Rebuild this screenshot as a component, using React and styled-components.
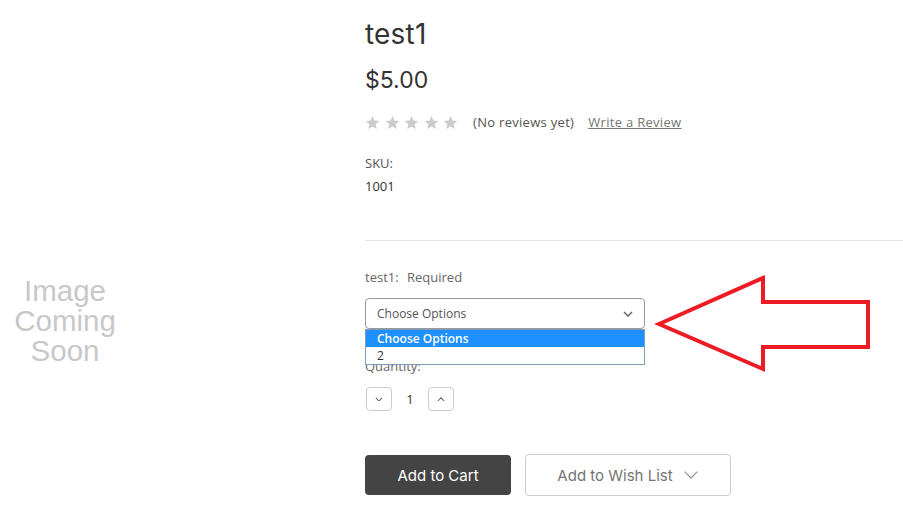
import React from "react";
import styled, { createGlobalStyle } from "styled-components";

const GlobalStyle = createGlobalStyle`
  html, body {
    margin: 0;
    padding: 0;
    background: #fff;
  }
  body {
    font-family: "Open Sans", "Liberation Sans", sans-serif;
    color: #545454;
  }
`;

const Page = styled.div`
  position: relative;
  width: 903px;
  height: 521px;
  overflow: hidden;
  display: grid;
  grid-template-columns: 130px 1fr;
  column-gap: 235px;
`;

const ImageSlot = styled.div`
  display: flex;
  align-items: center;
  justify-content: center;
  padding-top: 120px;
`;

const Placeholder = styled.div`
  font-family: "Liberation Sans", Arial, sans-serif;
  font-size: 29.5px;
  line-height: 30px;
  color: #c8c8c8;
  text-align: center;
`;

const Details = styled.div`
  padding-top: 16px;
`;

const Title = styled.h1`
  margin: 0;
  font-family: "Inter", sans-serif;
  font-weight: 400;
  font-size: 28px;
  line-height: 36px;
  color: #333;
  letter-spacing: 0.2px;
`;

const Price = styled.div`
  margin-top: 13px;
  font-family: "Inter", sans-serif;
  font-size: 23px;
  line-height: 30px;
  color: #333;
`;

const Rating = styled.div`
  display: flex;
  align-items: center;
  margin-top: 17px;
  height: 20px;
  font-size: 13px;
  letter-spacing: 0.3px;
`;

const Stars = styled.div`
  display: flex;
  gap: 4.5px;
  margin-right: 15px;
`;

const Muted = styled.span`
  color: #545454;
  margin-right: 14px;
`;

const ReviewLink = styled.a`
  color: #757575;
  text-decoration: underline;
`;

const Info = styled.dl`
  margin: 20px 0 0;
  font-size: 13px;
  line-height: 23px;
`;

const InfoTerm = styled.dt`
  color: #545454;
`;

const InfoValue = styled.dd`
  margin: 0;
  color: #333;
`;

const Rule = styled.hr`
  margin: 42px 0 0;
  border: 0;
  border-top: 1px solid #e5e5e5;
`;

const FieldLabel = styled.div`
  margin-top: 27px;
  font-size: 13px;
  line-height: 18px;
  color: #666;
  & small {
    font-size: 13px;
    margin-left: 5px;
  }
`;

const SelectWrap = styled.div`
  position: relative;
  margin-top: 12px;
  width: 280px;
`;

const Select = styled.div`
  box-sizing: border-box;
  height: 31px;
  border: 1px solid #999;
  border-radius: 4px;
  display: flex;
  align-items: center;
  justify-content: space-between;
  padding: 0 11px;
  font-size: 12px;
  color: #545454;
`;

const Menu = styled.ul`
  position: absolute;
  left: 0;
  right: 0;
  top: 31px;
  margin: 0;
  padding: 0;
  list-style: none;
  background: #fff;
  border: 1px solid #7f9db9;
  z-index: 2;
`;

const MenuItem = styled.li`
  height: 17px;
  line-height: 17px;
  padding: 0 11px;
  font-size: 12px;
  font-weight: ${(p) => (p.active ? 600 : 400)};
  background: ${(p) => (p.active ? "#1e90ff" : "#fff")};
  color: ${(p) => (p.active ? "#fff" : "#333")};
`;

const QtyLabel = styled.div`
  margin-top: 28px;
  font-size: 13px;
  line-height: 18px;
  color: #666;
`;

const QtyRow = styled.div`
  display: flex;
  align-items: center;
  margin-top: 12px;
`;

const QtyButton = styled.button`
  box-sizing: border-box;
  width: 26px;
  height: 24px;
  border: 1px solid #ccc;
  border-radius: 4px;
  background: #fff;
  display: flex;
  align-items: center;
  justify-content: center;
  padding: 0;
  margin-left: ${(p) => (p.first ? "1px" : "0")};
`;

const QtyValue = styled.span`
  width: 36px;
  text-align: center;
  font-size: 13px;
  color: #333;
`;

const Actions = styled.div`
  display: flex;
  align-items: center;
  gap: 14px;
  margin-top: 43px;
`;

const CartButton = styled.button`
  box-sizing: border-box;
  width: 146px;
  height: 40px;
  background: #444;
  color: #fff;
  border: 0;
  border-radius: 4px;
  font-family: "Inter", sans-serif;
  font-size: 15px;
`;

const WishButton = styled.button`
  box-sizing: border-box;
  width: 206px;
  height: 42px;
  background: #fff;
  color: #757575;
  border: 1px solid #ccc;
  border-radius: 4px;
  font-family: "Inter", sans-serif;
  font-size: 15px;
  display: flex;
  align-items: center;
  justify-content: center;
  gap: 10px;
`;

const Arrow = styled.svg`
  position: absolute;
  left: 0;
  top: 0;
  pointer-events: none;
`;

const Star = () => (
  <svg width="15" height="15" viewBox="0 0 24 24">
    <path
      fill="#ccc"
      d="M12 1.5l3.1 7.2 7.8.7-5.9 5.2 1.8 7.7L12 18.2l-6.8 4.1L7 14.6 1.1 9.4l7.8-.7z"
    />
  </svg>
);

const Chevron = ({ up, size = 10, color = "#757575", width = 1.5 }) => (
  <svg width={size} height={size * 0.6} viewBox="0 0 10 6">
    <path
      d={up ? "M1 5l4-4 4 4" : "M1 1l4 4 4-4"}
      fill="none"
      stroke={color}
      strokeWidth={width}
    />
  </svg>
);

export default function App() {
  return (
    <>
      <GlobalStyle />
      <Page>
        <ImageSlot>
          <Placeholder>
            Image
            <br />
            Coming
            <br />
            Soon
          </Placeholder>
        </ImageSlot>
        <Details>
          <Title>test1</Title>
          <Price>$5.00</Price>
          <Rating>
            <Stars>
              {[0, 1, 2, 3, 4].map((i) => (
                <Star key={i} />
              ))}
            </Stars>
            <Muted>(No reviews yet)</Muted>
            <ReviewLink href="#">Write a Review</ReviewLink>
          </Rating>
          <Info>
            <InfoTerm>SKU:</InfoTerm>
            <InfoValue>1001</InfoValue>
          </Info>
          <Rule />
          <FieldLabel>
            test1: <small>Required</small>
          </FieldLabel>
          <SelectWrap>
            <Select>
              Choose Options
              <Chevron size={10} color="#666" />
            </Select>
            <Menu>
              <MenuItem active>Choose Options</MenuItem>
              <MenuItem>2</MenuItem>
            </Menu>
          </SelectWrap>
          <QtyLabel>Quantity:</QtyLabel>
          <QtyRow>
            <QtyButton first>
              <Chevron size={8} color="#666" width={1.3} />
            </QtyButton>
            <QtyValue>1</QtyValue>
            <QtyButton>
              <Chevron up size={8} color="#666" width={1.3} />
            </QtyButton>
          </QtyRow>
          <Actions>
            <CartButton>Add to Cart</CartButton>
            <WishButton>
              Add to Wish List
              <Chevron size={16} color="#999" width={0.8} />
            </WishButton>
          </Actions>
        </Details>
        <Arrow width="903" height="521">
          <polygon
            points="659,324 763,278 763,302 868,302 868,347 763,347 763,369"
            fill="none"
            stroke="#ed1c24"
            strokeWidth="4"
            strokeLinejoin="miter"
          />
        </Arrow>
      </Page>
    </>
  );
}
